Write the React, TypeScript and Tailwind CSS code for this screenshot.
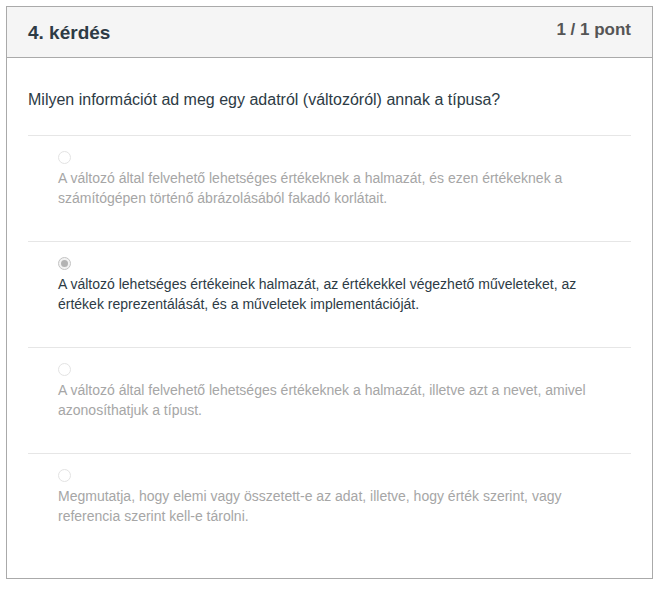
import React from "react";

const answers = [
  {
    text: "A változó által felvehető lehetséges értékeknek a halmazát, és ezen értékeknek a számítógépen történő ábrázolásából fakadó korlátait.",
    selected: false,
  },
  {
    text: "A változó lehetséges értékeinek halmazát, az értékekkel végezhető műveleteket, az értékek reprezentálását, és a műveletek implementációját.",
    selected: true,
  },
  {
    text: "A változó által felvehető lehetséges értékeknek a halmazát, illetve azt a nevet, amivel azonosíthatjuk a típust.",
    selected: false,
  },
  {
    text: "Megmutatja, hogy elemi vagy összetett-e az adat, illetve, hogy érték szerint, vagy referencia szerint kell-e tárolni.",
    selected: false,
  },
];

function Radio({ selected }: { selected: boolean }) {
  return (
    <span
      className={
        selected
          ? "flex h-[13px] w-[13px] items-center justify-center rounded-full border border-[#c4c4c4] bg-[#f2f2f2]"
          : "block h-[13px] w-[13px] rounded-full border border-[#e3e3e3] bg-white"
      }
    >
      {selected && <span className="block h-[7px] w-[7px] rounded-full bg-[#b3b3b3]" />}
    </span>
  );
}

export default function App() {
  return (
    <div className="bg-white pl-[6px] pt-[6px] pb-[12px]" style={{ fontFamily: '"Liberation Sans", Arial, sans-serif' }}>
      <div className="w-[647px] border border-[#aaaaaa] bg-white">
        <div className="flex h-[51px] items-center justify-between border-b border-[#aaaaaa] bg-[#f5f5f5] px-[21px]">
          <h2 className="mt-[2px] text-[19px] font-bold text-[#2d3b45]">4. kérdés</h2>
          <span className="-mt-[5px] text-[17px] font-bold text-[#555555]">1 / 1 pont</span>
        </div>
        <div className="px-[21px] pb-[19px] pt-[30px]">
          <p className="mb-[23px] text-[16px] leading-[24px] text-[#2d3b45]">
            Milyen információt ad meg egy adatról (változóról) annak a típusa?
          </p>
          {answers.map((a, i) => (
            <div key={i} className="border-t border-[#e6e6e6] pb-[33px] pl-[30px] pr-[28px] pt-[15px]">
              <Radio selected={a.selected} />
              <div
                className={
                  "mt-[4px] text-[14px] leading-[20px] " +
                  (a.selected ? "text-[#2d3b45]" : "text-[#a6a6a6]")
                }
              >
                {a.text}
              </div>
            </div>
          ))}
        </div>
      </div>
    </div>
  );
}
